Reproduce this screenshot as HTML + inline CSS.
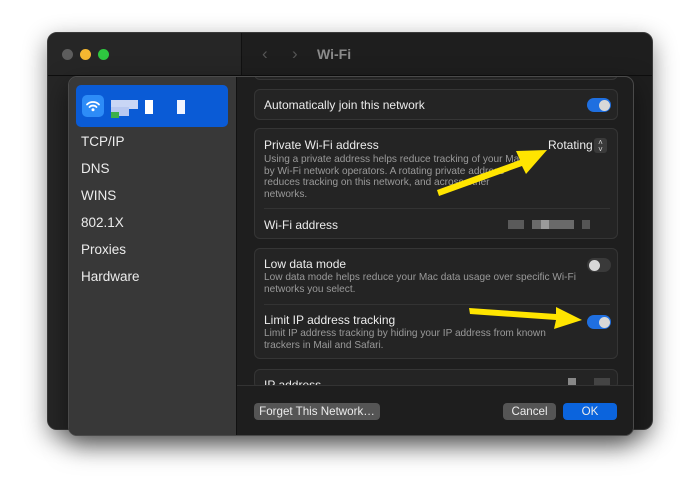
<!DOCTYPE html>
<html><head><meta charset="utf-8"><style>
*{margin:0;padding:0;box-sizing:border-box}
body{width:700px;height:499px;background:#fff;position:relative;overflow:hidden;font-family:"Liberation Sans",sans-serif;-webkit-font-smoothing:antialiased}
.abs{position:absolute}
.back{left:47px;top:32px;width:606px;height:398px;background:#1e1e1e;border-radius:10px;box-shadow:0 8px 24px rgba(0,0,0,.45);border:1px solid #3a3a3a;overflow:hidden}
.dlg{left:68px;top:76px;width:566px;height:360px;background:#1e1e1e;border-radius:9px;border:1px solid #4a4a4a;overflow:hidden;box-shadow:0 10px 25px rgba(0,0,0,.5)}
.side{left:0;top:0;width:168px;height:360px;background:#383838;border-right:1px solid #111}
.si{position:absolute;left:12px;color:#ececec;font-size:13.5px}
.card{position:absolute;left:185px;width:364px;background:#242424;border:1px solid #353535;border-radius:6px}
.t{position:absolute;left:9px;color:#ececec;font-size:12px}
.d{position:absolute;left:9px;color:#9a9a9a;font-size:10.1px;line-height:11.7px}
.tog{position:absolute;width:24px;height:14px;border-radius:7px}
.tog i{position:absolute;top:1.5px;width:11px;height:11px;border-radius:50%;background:#d8d8d8}
.btn{position:absolute;top:326px;height:17px;border-radius:4px;color:#ececec;font-size:11.6px;text-align:center;line-height:17px}
.px{position:absolute;height:9px}
</style></head><body>
<div class="abs back">
 <div class="abs" style="left:0;top:0;width:194px;height:398px;background:#262626;border-right:1px solid #111"></div>
 <div class="abs" style="left:14px;top:16px;width:11px;height:11px;border-radius:50%;background:#5d5d5d"></div>
 <div class="abs" style="left:32px;top:16px;width:11px;height:11px;border-radius:50%;background:#f5b731"></div>
 <div class="abs" style="left:50px;top:16px;width:11px;height:11px;border-radius:50%;background:#2ec840"></div>
 <div class="abs" style="left:214px;top:11px;color:#555;font-size:17px">&#x2039;</div>
 <div class="abs" style="left:244px;top:11px;color:#555;font-size:17px">&#x203A;</div>
 <div class="abs" style="left:269px;top:13px;color:#8a8a8a;font-size:14px;font-weight:bold">Wi-Fi</div>
 <div class="abs" style="left:0;top:42px;width:606px;height:1px;background:#0e0e0e"></div>
</div>
<div class="abs dlg">
 <div class="abs side">
  <div class="abs" style="left:7px;top:8px;width:152px;height:42px;background:#0a5bd6;border-radius:5px">
   <div class="abs" style="left:6px;top:10px;width:22px;height:22px;border-radius:5px;background:#2d8cf7">
    <svg width="22" height="22" viewBox="0 0 22 22"><g fill="none" stroke="#fff" stroke-width="1.8" stroke-linecap="round"><path d="M5 9.5a8.5 8.5 0 0 1 12 0"/><path d="M7.5 12a5 5 0 0 1 7 0"/></g><circle cx="11" cy="14.8" r="1.5" fill="#fff"/></svg>
   </div>
   <div class="px" style="left:35px;top:15px;width:27px;background:#c9d6f5"></div>
   <div class="px" style="left:35px;top:22px;width:18px;background:#b8c8f0"></div>
   <div class="px" style="left:35px;top:27px;width:8px;height:6px;background:#3cb04a"></div>
   <div class="px" style="left:69px;top:15px;width:8px;height:14px;background:#fff"></div>
   <div class="px" style="left:101px;top:15px;width:8px;height:14px;background:#f0f4ff"></div>
  </div>
  <div class="si" style="top:57px">TCP/IP</div>
  <div class="si" style="top:84px">DNS</div>
  <div class="si" style="top:111px">WINS</div>
  <div class="si" style="top:138px">802.1X</div>
  <div class="si" style="top:165px">Proxies</div>
  <div class="si" style="top:192px">Hardware</div>
 </div>
 <div class="card" style="top:-10px;height:13px"></div>
 <div class="card" style="top:12px;height:31px">
  <div class="t" style="top:8px">Automatically join this network</div>
  <div class="tog" style="left:332px;top:8px;background:#1f6fe0"><i style="left:11.5px"></i></div>
 </div>
 <div class="card" style="top:51px;height:111px">
  <div class="t" style="top:9px">Private Wi-Fi address</div>
  <div class="d" style="top:25px">Using a private address helps reduce tracking of your Mac<br>by Wi-Fi network operators. A rotating private address<br>reduces tracking on this network, and across other<br>networks.</div>
  <div class="abs" style="left:293px;top:9px;color:#eee;font-size:12px">Rotating</div>
  <div class="abs" style="left:339px;top:9px;width:13px;height:15px;background:#3a3a3a;border-radius:3px;color:#ddd;font-size:8px;line-height:7px;text-align:center;padding-top:1px">&#x2C4;<br>&#x2C5;</div>
  <div class="abs" style="left:9px;top:79px;width:346px;height:1px;background:#333"></div>
  <div class="t" style="top:89px">Wi-Fi address</div>
  <div class="px" style="left:253px;top:91px;width:16px;background:#5a5a5a"></div>
  <div class="px" style="left:277px;top:91px;width:42px;background:#6a6a6a"></div>
  <div class="px" style="left:286px;top:91px;width:8px;background:#9a9a9a"></div>
  <div class="px" style="left:327px;top:91px;width:8px;background:#555"></div>
 </div>
 <div class="card" style="top:171px;height:111px">
  <div class="t" style="top:8px">Low data mode</div>
  <div class="d" style="top:23px">Low data mode helps reduce your Mac data usage over specific Wi-Fi<br>networks you select.</div>
  <div class="tog" style="left:332px;top:9px;background:#3a3a3a"><i style="left:1.5px"></i></div>
  <div class="abs" style="left:9px;top:55px;width:346px;height:1px;background:#333"></div>
  <div class="t" style="top:64px">Limit IP address tracking</div>
  <div class="d" style="top:79px">Limit IP address tracking by hiding your IP address from known<br>trackers in Mail and Safari.</div>
  <div class="tog" style="left:332px;top:66px;background:#1f6fe0"><i style="left:11.5px"></i></div>
 </div>
 <div class="card" style="top:292px;height:20px">
  <div class="t" style="top:8px">IP address</div>
  <div class="px" style="left:313px;top:8px;width:8px;background:#888"></div>
  <div class="px" style="left:339px;top:8px;width:16px;background:#444"></div>
 </div>
 <div class="abs" style="left:168px;top:308px;width:398px;height:52px;background:#1e1e1e;border-top:1px solid #333"></div>
 <div class="btn" style="left:185px;width:126px;background:#555">Forget This Network…</div>
 <div class="btn" style="left:434px;width:53px;background:#555">Cancel</div>
 <div class="btn" style="left:494px;width:54px;background:#0b64dd">OK</div>
</div>
<svg class="abs" style="left:0;top:0" width="700" height="499">
 <g fill="#ffe500">
  <polygon points="439,196 437,190 520,160 516,151 547,150 526,174 522,166"/>
  <polygon points="469,308 470,314 556,320 554,329 582,320 556,307 556,314"/>
 </g>
</svg>
</body></html>
